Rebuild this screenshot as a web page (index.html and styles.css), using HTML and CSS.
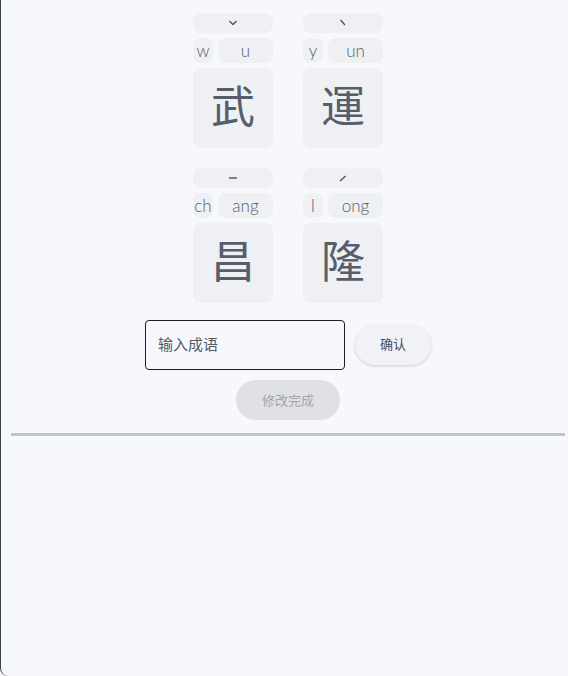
FILE: index.html
```
<!DOCTYPE html>
<html lang="zh">
<head>
<meta charset="utf-8">
<link rel="stylesheet" href="styles.css">
</head>
<body>
<div class="frame">
  <div class="content">
    <div class="grid">
      <div class="cell">
        <div class="tone"><svg width="10" height="8" viewBox="0 0 10 8"><polyline points="1.5,2 5,5.5 8.5,2" fill="none" stroke="#4a505a" stroke-width="1.3"/></svg></div>
        <div class="py"><span class="ini">w</span><span class="fin">u</span></div>
        <div class="char">武</div>
      </div>
      <div class="cell">
        <div class="tone"><svg width="10" height="8" viewBox="0 0 10 8"><line x1="2.5" y1="1" x2="7" y2="6" stroke="#4a505a" stroke-width="1.3"/></svg></div>
        <div class="py"><span class="ini">y</span><span class="fin">un</span></div>
        <div class="char">運</div>
      </div>
      <div class="cell">
        <div class="tone"><svg width="10" height="8" viewBox="0 0 10 8"><line x1="1" y1="4" x2="9" y2="4" stroke="#4a505a" stroke-width="1.4"/></svg></div>
        <div class="py"><span class="ini">ch</span><span class="fin">ang</span></div>
        <div class="char">昌</div>
      </div>
      <div class="cell">
        <div class="tone"><svg width="10" height="8" viewBox="0 0 10 8"><line x1="2" y1="7" x2="7.5" y2="2" stroke="#4a505a" stroke-width="1.3"/></svg></div>
        <div class="py"><span class="ini">l</span><span class="fin">ong</span></div>
        <div class="char">隆</div>
      </div>
    </div>
    <div class="inputrow">
      <input class="idiom" type="text" placeholder="输入成语">
      <button class="confirm">确认</button>
    </div>
    <button class="done" disabled>修改完成</button>
    <div class="divider"></div>
  </div>
</div>
</body>
</html>
```
FILE: styles.css
```
html, body {
  margin: 0;
  padding: 0;
  background: #f7f8fd;
}
.frame {
  box-sizing: border-box;
  height: 676px;
  border-left: 1px solid #3a3e46;
  border-bottom-left-radius: 8px;
  background: #f7f8fd;
  padding: 13px 3px 0 10px;
}
.content {
  display: flex;
  flex-direction: column;
  align-items: center;
}
.grid {
  display: grid;
  grid-template-columns: 80px 80px;
  column-gap: 30px;
  row-gap: 20px;
}
.cell {
  display: flex;
  flex-direction: column;
  gap: 5px;
  width: 80px;
}
.tone {
  height: 20px;
  border-radius: 8px;
  background: #eef0f4;
  display: flex;
  align-items: center;
  justify-content: center;
}
.tone svg {
  display: block;
}
.py {
  display: flex;
  gap: 5px;
  height: 25px;
}
.ini, .fin {
  display: flex;
  align-items: center;
  justify-content: center;
  background: #eef0f4;
  border-radius: 8px;
  font-family: "Lato", sans-serif;
  font-size: 17px;
  color: #575d66;
  font-weight: 300;
  padding-bottom: 1px;
  box-sizing: border-box;
}
.ini { width: 20px; }
.fin { flex: 1; }
.char {
  box-sizing: border-box;
  height: 80px;
  border-radius: 8px;
  background: #eef0f4;
  display: flex;
  align-items: center;
  justify-content: center;
  padding-bottom: 8px;
  font-family: "Noto Sans CJK TC", "Noto Sans CJK SC", sans-serif;
  font-size: 44px;
  line-height: 1;
  color: #565e6b;
}
.inputrow {
  display: flex;
  align-items: center;
  gap: 10px;
  margin-top: 17px;
}
.idiom {
  box-sizing: border-box;
  width: 200px;
  height: 50px;
  border: 1px solid #1d1f24;
  border-radius: 4px;
  background: transparent;
  padding: 0 12px 3px;
  font-family: "Noto Sans CJK SC", sans-serif;
  font-size: 15px;
  color: #333;
  outline: none;
}
.idiom::placeholder {
  color: #555a62;
}
.confirm {
  width: 76px;
  height: 40px;
  border: none;
  border-radius: 20px;
  background: #f1f2f8;
  box-shadow: 0 1px 3px rgba(0,0,0,0.18);
  font-family: "Noto Sans CJK SC", sans-serif;
  font-size: 13px;
  color: #454d5e;
  padding: 0 0 3px;
}
.done {
  margin-top: 10px;
  width: 104px;
  height: 40px;
  border: none;
  border-radius: 20px;
  background: #e0e1e5;
  font-family: "Noto Sans CJK SC", sans-serif;
  font-size: 13px;
  color: #a3a5ab;
  padding: 0 0 2px;
}
.divider {
  align-self: stretch;
  margin-top: 13px;
  height: 3px;
  background: #c0c4cf;
}
```
